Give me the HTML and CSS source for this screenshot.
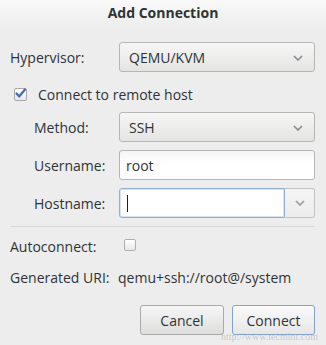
FILE: index.html
```html
<!DOCTYPE html>
<html>
<head>
<meta charset="utf-8">
<link rel="stylesheet" href="styles.css">
</head>
<body>
<div class="dialog">
  <div class="titlebar">Add Connection</div>
  <div class="content">
    <div class="row top">
      <span class="label">Hypervisor:</span>
      <div class="combo"><span>QEMU/KVM</span><svg class="arrow" width="10" height="6" viewBox="0 0 10 6"><path d="M1 1 L5 5 L9 1" fill="none" stroke="#8a8a8a" stroke-width="1.6"/></svg></div>
    </div>
    <label class="check-row">
      <span class="checkbox checked"><svg width="13" height="13" viewBox="0 0 13 13"><path d="M2.5 6.5 L5.2 9.5 L11 2.5" fill="none" stroke="#3d6fb6" stroke-width="2.2" stroke-linecap="round" stroke-linejoin="round"/></svg></span>
      <span class="text">Connect to remote host</span>
    </label>
    <div class="row sub">
      <span class="label">Method:</span>
      <div class="combo"><span>SSH</span><svg class="arrow" width="10" height="6" viewBox="0 0 10 6"><path d="M1 1 L5 5 L9 1" fill="none" stroke="#8a8a8a" stroke-width="1.6"/></svg></div>
    </div>
    <div class="row sub">
      <span class="label">Username:</span>
      <div class="entry"><span>root</span></div>
    </div>
    <div class="row sub">
      <span class="label">Hostname:</span>
      <div class="entry-combo">
        <div class="entry focus"><span class="caret"></span></div>
        <div class="dropbtn"><svg width="10" height="6" viewBox="0 0 10 6"><path d="M1 1 L5 5 L9 1" fill="none" stroke="#9a9a9a" stroke-width="1.6"/></svg></div>
      </div>
    </div>
    <div class="separator"></div>
    <div class="row auto">
      <span class="label">Autoconnect:</span>
      <span class="checkbox"></span>
    </div>
    <div class="row uri">
      <span class="label">Generated URI:</span>
      <span class="value">qemu+ssh://root@/system</span>
    </div>
    <div class="buttons">
      <button class="btn">Cancel</button>
      <button class="btn default">Connect</button>
    </div>
    <div class="watermark">http://www.tecmint.com</div>
  </div>
</div>
</body>
</html>
```
FILE: styles.css
```css
html, body {
  margin: 0;
  padding: 0;
  background: #ededed;
}
.dialog {
  width: 326px;
  height: 345px;
  background: #ededed;
  font-family: "Open Sans", "DejaVu Sans", sans-serif;
  font-size: 14px;
  color: #2e3436;
  position: relative;
  overflow: hidden;
}
.titlebar {
  height: 27px;
  line-height: 25px;
  text-align: center;
  font-weight: bold;
  color: #2e3436;
  background: linear-gradient(#fafafa, #ededed);
}
.content {
  padding: 15px 11px 0 10px;
}
.row {
  display: flex;
  align-items: center;
  height: 30px;
}
.label {
  width: 109px;
  flex: none;
}
.row.sub .label {
  padding-left: 24px;
  width: 85px;
}
.combo {
  flex: 1;
  height: 28px;
  border: 1px solid #b6b6b3;
  border-radius: 3px;
  background: linear-gradient(#f6f6f6, #e4e4e3);
  display: flex;
  align-items: center;
  justify-content: space-between;
  padding: 0 11px 0 9px;
}
.arrow { margin-top: 1px; }
.check-row {
  display: flex;
  align-items: center;
  height: 22px;
  margin-top: 11px;
}
.checkbox {
  width: 12px;
  height: 12px;
  border: 1px solid #a8a8a8;
  border-radius: 2px;
  background: linear-gradient(#ffffff, #e8e8e8);
  position: relative;
  flex: none;
  box-sizing: border-box;
}
.check-row .checkbox { margin-left: 4px; margin-right: 11px; width: 13px; height: 13px; }
.checkbox svg { position: absolute; left: -1px; top: -2px; }
.row.sub { margin-top: 8px; }
.check-row + .row.sub { margin-top: 7px; }
.entry {
  flex: 1;
  height: 28px;
  border: 1px solid #b6b6b3;
  border-radius: 3px;
  background: linear-gradient(#f4f4f4, #ffffff 40%);
  display: flex;
  align-items: center;
  padding: 0 6px;
}
.entry-combo {
  flex: 1;
  display: flex;
  height: 30px;
}
.entry.focus {
  border-color: #8eb0d8;
  border-radius: 3px 0 0 3px;
  background: #ffffff;
  box-shadow: inset 0 0 0 1px #d6e2f0;
}
.caret {
  width: 1px;
  height: 17px;
  background: #1e1e1e;
  margin-left: 1px;
}
.dropbtn {
  width: 29px;
  border: 1px solid #c2c2c0;
  border-left: none;
  border-radius: 0 3px 3px 0;
  background: linear-gradient(#f4f4f4, #ececec);
  display: flex;
  align-items: center;
  justify-content: center;
}
.separator {
  height: 1px;
  background: #d8d8d8;
  margin-top: 8px;
}
.row.auto {
  margin-top: 11px;
  height: 16px;
}
.row.auto .label { width: 114px; }
.row.auto .checkbox { border-color: #b0b0b0; margin-top: -2px; }
.row.uri {
  margin-top: 13px;
  height: 20px;
}
.row.uri .label { width: 108px; }
.buttons {
  display: flex;
  justify-content: flex-end;
  gap: 8px;
  margin-top: 18px;
}
.btn {
  font-family: inherit;
  font-size: 14px;
  color: #2e3436;
  height: 30px;
  border: 1px solid #a9a9a7;
  border-radius: 3px;
  background: linear-gradient(#f6f6f6, #dededd);
  padding: 0;
  width: 84px;
}
.btn.default {
  width: 83px;
  border-color: #7fa4cf;
  background: linear-gradient(#fafafa, #e6e6e6);
}
.watermark {
  position: absolute;
  right: 8px;
  bottom: 3px;
  font-family: "Liberation Serif", serif;
  font-size: 10px;
  color: rgba(150,150,150,0.45);
}
```
